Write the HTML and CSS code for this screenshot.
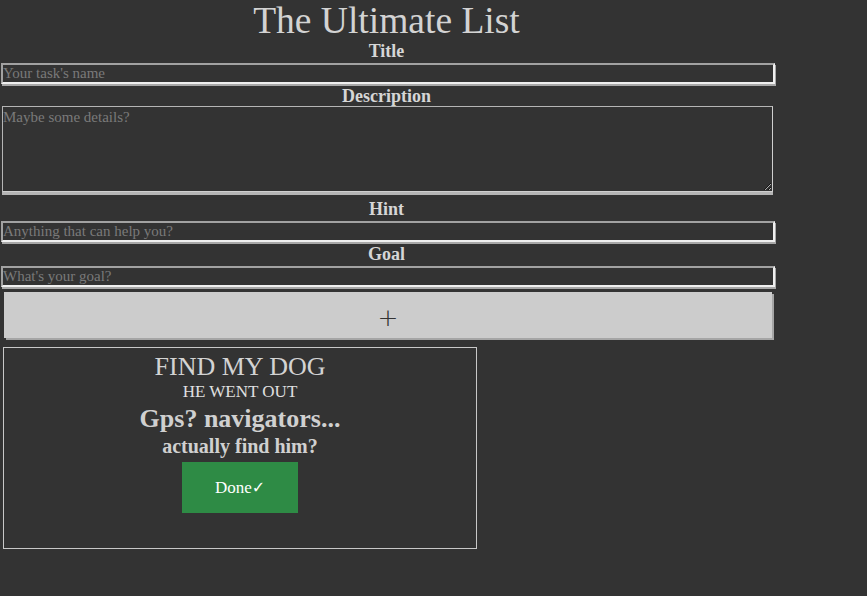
FILE: index.html
```html
<!DOCTYPE html>
<html>
<head>
<meta charset="utf-8">
<link rel="stylesheet" href="styles.css">
</head>
<body>
<div class="app">
  <form class="form">
    <h1 class="heading">The Ultimate List</h1>
    <label class="label" for="t">Title</label>
    <input class="field" id="t" type="text" placeholder="Your task's name">
    <label class="label" for="d">Description</label>
    <textarea class="field area" id="d" placeholder="Maybe some details?"></textarea>
    <label class="label" for="h">Hint</label>
    <input class="field" id="h" type="text" placeholder="Anything that can help you?">
    <label class="label" for="g">Goal</label>
    <input class="field" id="g" type="text" placeholder="What's your goal?">
    <button class="add" type="button">+</button>
  </form>
  <div class="card">
    <div class="card-title">FIND MY DOG</div>
    <div class="card-desc">HE WENT OUT</div>
    <div class="card-hint">Gps? navigators...</div>
    <div class="card-goal">actually find him?</div>
    <button class="done" type="button">Done<span class="tick">✓</span></button>
  </div>
</div>
</body>
</html>
```
FILE: styles.css
```css
html, body {
  margin: 0;
  padding: 0;
  background: #333333;
}
body {
  font-family: "Liberation Serif", "DejaVu Serif", serif;
  color: #cccccc;
}
.app {
  padding: 0 0 0 1px;
}
.form {
  width: 774px;
  display: flex;
  flex-direction: column;
  align-items: flex-start;
}
.heading {
  align-self: stretch;
  margin: 0;
  font-size: 37.5px;
  line-height: 41px;
  font-weight: normal;
  text-align: center;
  color: #d3d3d3;
  padding-right: 3px;
}
.label {
  align-self: stretch;
  display: block;
  text-align: center;
  font-weight: bold;
  font-size: 18px;
  line-height: 20px;
  color: #d6d6d6;
  padding-right: 3px;
}
.field {
  box-sizing: border-box;
  width: 774px;
  height: 21px;
  margin: 2px 0 2px 0;
  padding: 0;
  background: #333333;
  border: 2px solid;
  border-color: #a2a2a2 #f0f0f0 #f0f0f0 #a2a2a2;
  box-shadow: 1px 2px 0 #a8a8a8;
  font-family: "Liberation Serif", serif;
  font-size: 15px;
  color: #cccccc;
  outline: none;
}
.field::placeholder {
  color: #7a7a7a;
}
.area {
  width: 771px;
  height: 86px;
  margin: 0 0 7px 1px;
  padding: 1px 0 0 0;
  border-width: 1px;
  border-color: #b5b5b5 #cfcfcf #cfcfcf #b5b5b5;
  box-shadow: 0 3px 0 #b5b5b5;
  resize: vertical;
  line-height: 18px;
}
.add {
  box-sizing: border-box;
  margin: 3px 0 0 3px;
  width: 768px;
  height: 46px;
  background: #cccccc;
  border: none;
  box-shadow: 2px 2px 0 #a5a5a5;
  font-family: "DejaVu Sans", sans-serif;
  font-size: 25px;
  font-weight: 300;
  color: #333333;
  padding: 4px 0 0 0;
}
.card {
  box-sizing: border-box;
  width: 474px;
  height: 202px;
  margin: 9px 0 0 2px;
  border: 1px solid #c8c8c8;
  display: flex;
  flex-direction: column;
  align-items: center;
  padding-top: 4px;
}
.card-title {
  font-size: 26px;
  line-height: 29px;
  color: #d3d3d3;
}
.card-desc {
  font-size: 17px;
  line-height: 22px;
  color: #e0e0e0;
}
.card-hint {
  font-size: 26px;
  line-height: 31px;
  font-weight: bold;
  color: #d0d0d0;
}
.card-goal {
  font-size: 20px;
  line-height: 24px;
  font-weight: bold;
  color: #d0d0d0;
}
.done {
  margin-top: 4px;
  width: 116px;
  height: 51px;
  border: none;
  background: #2e8b45;
  color: #ffffff;
  font-family: "Liberation Serif", serif;
  font-size: 17px;
  padding: 0;
}
.tick {
  font-family: "DejaVu Sans", sans-serif;
  font-weight: bold;
  font-size: 16px;
}
```
